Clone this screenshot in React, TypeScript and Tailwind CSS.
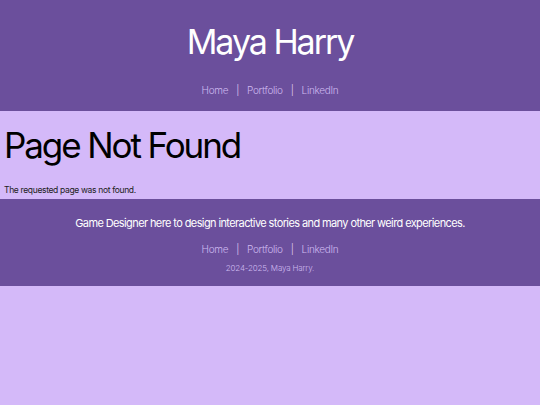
export default function App() {
  const links = ["Home", "Portfolio", "LinkedIn"];

  const Nav = () => (
    <nav className="flex items-center justify-center text-[10px] font-light tracking-[-0.03em] text-[#cdb9ef]">
      {links.map((l, i) => (
        <span key={l} className="flex items-center">
          {i > 0 && <span className="px-[8px] text-[#e3d6f7]">|</span>}
          <a href="#" className="hover:underline">
            {l}
          </a>
        </span>
      ))}
    </nav>
  );

  return (
    <div
      className="min-h-screen bg-[#d4b9f9] text-black"
      style={{ fontFamily: "Inter, 'Noto Sans', sans-serif" }}
    >
      <header className="flex h-[111px] flex-col items-center bg-[#6b4f9c]">
        <h1 className="mt-[19px] text-[34px] leading-[46px] tracking-[-0.06em] text-white">
          Maya Harry
        </h1>
        <div className="mt-[18px]">
          <Nav />
        </div>
      </header>

      <main className="flex h-[88px] flex-col px-[4px]">
        <h2 className="mt-[12px] text-[35px] leading-[44px] tracking-[-0.06em]">
          Page Not Found
        </h2>
        <p className="mt-[17px] text-[8.5px] tracking-[-0.04em] text-[#222]">
          The requested page was not found.
        </p>
      </main>

      <footer className="flex h-[87px] flex-col items-center bg-[#6b4f9c]">
        <p className="mt-[16px] text-[11px] tracking-[-0.055em] text-white">
          Game Designer here to design interactive stories and many other weird experiences.
        </p>
        <div className="mt-[10px]">
          <Nav />
        </div>
        <p className="mt-[5px] text-[8px] font-light tracking-[-0.02em] text-[#cdb9ef]">
          2024-2025, Maya Harry.
        </p>
      </footer>
    </div>
  );
}
